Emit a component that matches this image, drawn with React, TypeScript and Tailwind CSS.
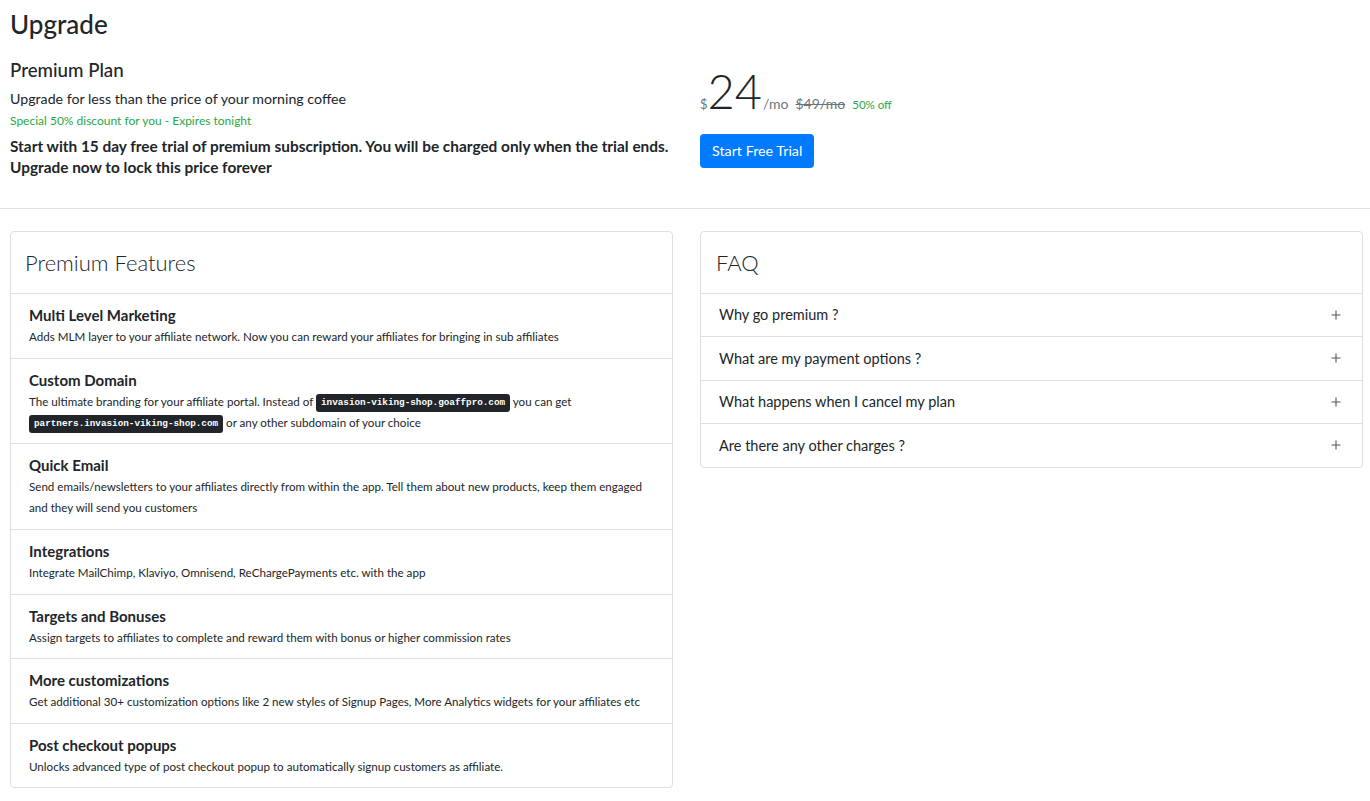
import { Fragment } from "react";

type Feature = {
  title: string;
  body: React.ReactNode;
};

const Kbd = ({ children }: { children: React.ReactNode }) => (
  <kbd className="inline-block rounded-[3px] bg-[#212529] px-[5px] py-[1px] align-middle font-['Liberation_Mono',monospace] text-[9.3px] leading-[16px] font-bold text-white">
    {children}
  </kbd>
);

const features: Feature[] = [
  {
    title: "Multi Level Marketing",
    body: "Adds MLM layer to your affiliate network. Now you can reward your affiliates for bringing in sub affiliates",
  },
  {
    title: "Custom Domain",
    body: (
      <Fragment>
        The ultimate branding for your affiliate portal. Instead of{" "}
        <Kbd>invasion-viking-shop.goaffpro.com</Kbd> you can get{" "}
        <Kbd>partners.invasion-viking-shop.com</Kbd> or any other subdomain of
        your choice
      </Fragment>
    ),
  },
  {
    title: "Quick Email",
    body: "Send emails/newsletters to your affiliates directly from within the app. Tell them about new products, keep them engaged and they will send you customers",
  },
  {
    title: "Integrations",
    body: "Integrate MailChimp, Klaviyo, Omnisend, ReChargePayments etc. with the app",
  },
  {
    title: "Targets and Bonuses",
    body: "Assign targets to affiliates to complete and reward them with bonus or higher commission rates",
  },
  {
    title: "More customizations",
    body: "Get additional 30+ customization options like 2 new styles of Signup Pages, More Analytics widgets for your affiliates etc",
  },
  {
    title: "Post checkout popups",
    body: "Unlocks advanced type of post checkout popup to automatically signup customers as affiliate.",
  },
];

const faqs = [
  "Why go premium ?",
  "What are my payment options ?",
  "What happens when I cancel my plan",
  "Are there any other charges ?",
];

const PlusIcon = () => (
  <svg width="10" height="10" viewBox="0 0 10 10" className="text-[#555]">
    <path d="M5 0.5v9M0.5 5h9" stroke="currentColor" strokeWidth="1.1" />
  </svg>
);

export default function App() {
  return (
    <div className="min-h-screen bg-white font-['Lato','Segoe_UI',sans-serif] text-[#212529]">
      {/* plan summary */}
      <div className="pl-[10px] pr-[7px] pt-[9px]">
        <h3 className="text-[26px] leading-[30px] font-medium">Upgrade</h3>
        <div className="mt-[21px] grid grid-cols-2 gap-[27px]">
          <div>
            <h5 className="text-[18.7px] leading-[21px] font-medium">
              Premium Plan
            </h5>
            <p className="mt-[7px] text-[14.2px] leading-[21px]">
              Upgrade for less than the price of your morning coffee
            </p>
            <p className="mt-[3px] text-[12px] leading-[18px] text-[#28a745]">
              Special 50% discount for you - Expires tonight
            </p>
            <p className="mt-[6px] text-[15.4px] leading-[21px] font-bold">
              Start with 15 day free trial of premium subscription. You will be
              charged only when the trial ends.
              <br />
              Upgrade now to lock this price forever
            </p>
          </div>
          <div>
            <div className="mt-[8px] flex items-baseline">
              <span className="text-[13px] text-[#6c757d]">$</span>
              <span className="text-[47px] leading-none font-light">24</span>
              <span className="ml-[1px] text-[14px] text-[#6c757d]">/mo</span>
              <span className="ml-[7px] text-[14px] text-[#6c757d] line-through">
                $49/mo
              </span>
              <span className="ml-[7px] text-[11.5px] text-[#28a745]">
                50% off
              </span>
            </div>
            <button className="mt-[19px] h-[34px] rounded-[4px] bg-[#007bff] px-[12px] text-[14.3px] text-white">
              Start Free Trial
            </button>
          </div>
        </div>
      </div>

      <hr className="mt-[30px] border-[#dee2e6]" />

      {/* features and faq */}
      <div className="grid grid-cols-2 items-start gap-[27px] pt-[22px] pl-[10px] pr-[7px] pb-[13px]">
        <div className="rounded-[4px] border border-[#dfdfdf]">
          <div className="flex h-[62px] items-center border-b border-[#dfdfdf] px-[14px]">
            <h4 className="text-[22px] font-light">Premium Features</h4>
          </div>
          {features.map((feature, index) => (
            <div
              key={index}
              className="border-b border-[#dfdfdf] px-[18px] pt-[11px] pb-[10.6px] last:border-b-0"
            >
              <h6 className="text-[15px] leading-[21px] font-bold">
                {feature.title}
              </h6>
              <p className="text-[11.6px] leading-[21px]">{feature.body}</p>
            </div>
          ))}
        </div>

        <div className="rounded-[4px] border border-[#dfdfdf]">
          <div className="flex h-[62px] items-center border-b border-[#dfdfdf] px-[15px]">
            <h4 className="text-[22px] font-light">FAQ</h4>
          </div>
          {faqs.map((question, index) => (
            <div
              key={index}
              className="flex h-[43.25px] items-center justify-between border-b border-[#dfdfdf] pl-[18px] pr-[21px] last:border-b-0"
            >
              <span className="text-[14.5px]">{question}</span>
              <PlusIcon />
            </div>
          ))}
        </div>
      </div>
    </div>
  );
}
